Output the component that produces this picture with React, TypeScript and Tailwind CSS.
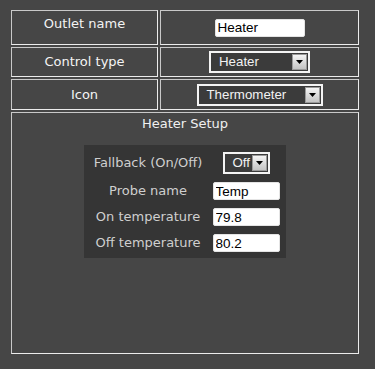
import React from "react";

const label = "font-['DejaVu_Sans',sans-serif] text-[13px] leading-4";

function Arrow() {
  return (
    <div className="w-[15px] h-[16px] mr-[1px] flex items-center justify-center border border-[#9a9a9a] bg-gradient-to-b from-[#f4f4f4] to-[#c4c4c4]">
      <svg width="7" height="4" viewBox="0 0 7 4">
        <path d="M0 0h7L3.5 4z" fill="#000" />
      </svg>
    </div>
  );
}

function FakeSelect({ value, w }: { value: string; w: string }) {
  return (
    <div className={`${w} h-[22px] flex items-center border-2 border-[#f4f4f4] bg-[#3b3b3b]`}>
      <span className="flex-1 pl-[8px] text-[#f2f2f2] font-['Liberation_Sans',Arial,sans-serif] text-[13.3px] leading-4 whitespace-nowrap overflow-hidden">
        {value}
      </span>
      <Arrow />
    </div>
  );
}

function TextBox({ value, w }: { value: string; w: string }) {
  return (
    <input
      readOnly
      value={value}
      className={`${w} h-[18px] bg-white rounded-[2px] border border-[#e4e4e4] px-[2px] text-black font-['Liberation_Sans',Arial,sans-serif] text-[13.5px] leading-4 outline-none`}
    />
  );
}

const cell = "border border-[#c9c9c9] border-r-[#ececec] border-b-[#ececec]";

export default function App() {
  const setup = [
    { name: "Probe name", value: "Temp" },
    { name: "On temperature", value: "79.8" },
    { name: "Off temperature", value: "80.2" },
  ];

  return (
    <div className="w-[375px] h-[369px] bg-[#464646] pt-[10px] pl-[11px]">
      <div className="grid grid-cols-[147px_199px] grid-rows-[35px_30px_31px_242px] gap-[2px]">
        <div className={`${cell} flex justify-center pt-[5px] text-[#f4f4f4] ${label}`}>Outlet name</div>
        <div className={`${cell} flex items-center justify-center`}>
          <TextBox value="Heater" w="w-[90px]" />
        </div>

        <div className={`${cell} flex items-center justify-center text-[#f4f4f4] ${label}`}>Control type</div>
        <div className={`${cell} flex items-center justify-center`}>
          <FakeSelect value="Heater" w="w-[101px]" />
        </div>

        <div className={`${cell} flex items-center justify-center text-[#f4f4f4] ${label}`}>Icon</div>
        <div className={`${cell} flex items-center justify-center`}>
          <FakeSelect value="Thermometer" w="w-[126px]" />
        </div>

        <div className={`${cell} col-span-2 pt-[3px]`}>
          <div className={`text-center text-[#f0f0f0] ${label}`}>Heater Setup</div>
          <div className="mt-[13px] mx-auto w-[202px] bg-[#353535] px-[4px] pt-[3px] pb-[2px]">
            <div className="grid grid-cols-[120px_72px] gap-x-[2px]">
              <div className={`py-[4px] flex items-center justify-center whitespace-nowrap text-[#cfcfcf] ${label}`}>
                Fallback (On/Off)
              </div>
              <div className="py-[4px] flex items-center justify-center">
                <FakeSelect value="Off" w="w-[47px]" />
              </div>
              {setup.map((s) => (
                <React.Fragment key={s.name}>
                  <div className={`py-[4px] flex items-center justify-center whitespace-nowrap text-[#cfcfcf] ${label}`}>
                    {s.name}
                  </div>
                  <div className="py-[4px] flex items-center justify-center">
                    <TextBox value={s.value} w="w-[67px]" />
                  </div>
                </React.Fragment>
              ))}
            </div>
          </div>
        </div>
      </div>
    </div>
  );
}
